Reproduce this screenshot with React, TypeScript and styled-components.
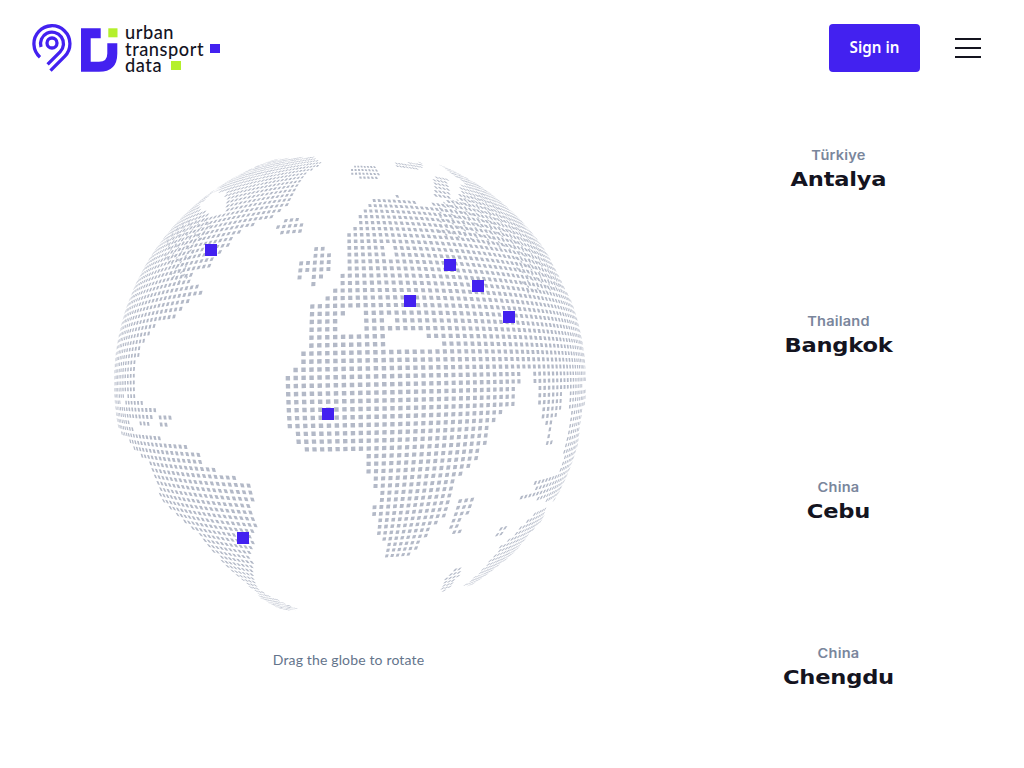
import React from 'react';
import styled, { createGlobalStyle } from 'styled-components';

const CX = 350, CY = 383, R = 236, K = 0.27;
type P = [number, number][];
const at = (ox: number, oy: number, a: number[]): P => {
  const o: P = [];
  for (let i = 0; i < a.length; i += 2) o.push([ox + a[i] / 3, oy + a[i + 1] / 3]);
  return o;
};
const Z2 = (a: number[]) => at(110, 150, a);
const Z3 = (a: number[]) => at(350, 150, a);
const Z4 = (a: number[]) => at(110, 380, a);
const Z5 = (a: number[]) => at(350, 380, a);

const land: P[] = [
  // North America
  Z2([610,20,640,42,600,62,580,78,575,100,560,130,535,160,525,175,510,190,455,212,415,232,370,270,345,293,320,320,305,340,300,365,250,362,240,385,255,405,280,425,240,455,220,478,185,505,128,530,122,558,98,580,92,612,82,635,80,660,72,690,72,722,0,722,-40,500,100,250,300,100,450,30]),
  Z2([490,248,495,225,550,200,575,218,572,248]),
  Z2([610,288,648,288,670,330,668,362,632,392,622,408,605,405,562,388,565,335]),
  // Africa + Eurasia
  [
    ...Z2([518,712,540,668,565,638,588,590,585,460,652,455,655,415,680,393,705,368,712,245]),
    ...Z3([15,228,45,172,60,155,95,140,148,138,188,152,225,170,250,162,320,150,340,100,345,82,400,100,560,250,720,560,730,700,520,700,505,712]),
    ...Z5([505,5,505,45,485,78,448,108,425,130,422,175,398,198,394,222,372,248,348,272,325,292,318,315,312,340,308,360,300,400,274,420,252,440,244,462,222,475,218,495,192,515,172,532,98,533,98,510,102,492,85,478,85,455,87,438,72,425,68,378,92,352,92,338,72,325,72,294,47,275,47,222,0,208]),
    ...Z4([720,212,582,218,552,192,548,155,528,148,522,92,516,10]),
  ],
  // India-like peninsula
  Z5([553,5,705,5,695,22,642,22,636,76,622,100,606,130,606,198,584,198,590,150,574,125,578,100,566,75,566,40]),
  // limb strip
  Z5([652,22,720,22,695,100,684,190,664,262,640,320,620,322,626,280,638,236,645,190,658,150,658,95,655,60]),
  // Madagascar / peninsula
  Z5([347,344,380,344,372,378,342,418,330,458,295,458,304,425,318,395,326,362]),
  // Sumatra
  Z5([318,563,337,563,326,590,302,625,272,637,292,585]),
  // Australia-like strip
  Z5([342,618,395,572,428,530,458,492,490,465,520,432,545,410,566,385,592,380,578,420,556,442,522,482,500,512,470,537,440,562,400,592,362,616]),
  Z5([432,470,438,458,458,438,468,440,462,462,448,472]),
  Z5([505,368,520,335,548,332,552,310,585,284,616,282,636,310,632,330,612,362,558,365,548,350,520,352,516,372]),
  // Small far north
  Z3([3,52,35,42,88,55,85,82,50,97,5,72]),
  Z3([133,38,218,38,218,58,135,52]),
  Z3([248,82,296,82,300,148,252,148]),
  Z3([262,40,350,72,420,130,345,100]),
  // South America
  Z4([75,208,58,182,84,165,150,163,150,178,198,180,238,205,275,225,282,255,322,268,362,288,428,303,434,335,428,375,438,440,428,510,428,590,442,622,482,650,565,688,520,692,460,660,418,618,368,578,318,522,272,472,228,432,188,396,158,362,138,312,122,272,112,240,88,225]),
  Z4([12,72,98,62,100,84,138,86,136,108,132,132,84,132,84,114,62,114,62,140,80,160,80,187,60,187,36,160,18,146]),
  Z4([145,98,188,98,186,112,174,142,158,142,144,124]),
  Z4([52,43,76,43,76,60,52,60]),
  Z4([60,18,74,18,74,34,60,34]),
  Z4([10,-10,50,-10,45,20,48,40,28,72,8,72]),
];

const holes: P[] = [
  Z2([305,130,345,122,352,165,338,198,292,192,265,168]),
  Z2([698,498,722,498,722,558,682,558,682,528]),
  Z2([585,368,606,368,606,412,560,412,560,395]),
  Z2([650,368,682,368,682,402,650,402]),
  Z2([560,285,606,285,606,328,560,328]),
  Z3([-6,478,28,478,28,546,-6,546]),
  Z3([108,550,158,548,158,545,228,545,228,570,278,570,278,594,108,596]),
  Z3([105,292,132,292,132,318,105,318]),
  Z3([105,498,126,498,126,522,105,522]),
  Z5([515,-40,552,-40,552,50,515,50]),
];

const moire: P[] = [
  Z2([170,225,300,200,305,240,240,320,235,395,190,395,165,330]),
  Z3([255,165,400,130,560,280,640,420,530,430,480,300,270,250]),
];

const inPoly = (x: number, y: number, p: P) => {
  let c = false;
  for (let i = 0, j = p.length - 1; i < p.length; j = i++) {
    const [xi, yi] = p[i], [xj, yj] = p[j];
    if ((yi > y) !== (yj > y) && x < ((xj - xi) * (y - yi)) / (yj - yi) + xi) c = !c;
  }
  return c;
};

// Wraps a flat dot grid over the disk: meridians converge and rows bow away from the equator.
const project = (gx: number, gy: number, rot: number): [number, number] | null => {
  const c = Math.cos(rot), s = Math.sin(rot);
  const a = (gx * c - gy * s) / R, b = (gx * s + gy * c) / R;
  if (Math.abs(a) >= Math.PI / 2 || Math.abs(b) >= Math.PI / 2) return null;
  const bow = K * (1 - (b / (Math.PI / 2)) ** 2);
  const y = Math.sin(b) * (1 - bow * (1 - Math.cos(a)));
  const x = Math.sqrt(1 - y * y) * Math.sin(a);
  return [CX + R * x, CY + R * y];
};

const dots = (step: number, size: number, rot: number, regions: P[], cut: P[]) => {
  let out = '';
  const n = Math.ceil(380 / step);
  const h = size / 2;
  for (let i = -n; i <= n; i++) {
    for (let j = -n; j <= n; j++) {
      const gx = i * step + 2, gy = j * step + 2;
      const m = project(gx, gy, rot);
      if (!m) continue;
      if (!regions.some((p) => inPoly(m[0], m[1], p))) continue;
      if (cut.some((p) => inPoly(m[0], m[1], p))) continue;
      const q = [project(gx - h, gy - h, rot), project(gx + h, gy - h, rot), project(gx + h, gy + h, rot), project(gx - h, gy + h, rot)];
      if (q.some((v) => !v)) continue;
      out += 'M' + q.map((v) => `${v![0].toFixed(1)} ${v![1].toFixed(1)}`).join('L') + 'Z';
    }
  }
  return out;
};

const landPath = dots(8.1, 4.5, -0.02, land, holes);
const moirePath = dots(8.1, 2.8, 0.5, moire, []);

const markers = [[211, 250], [450, 265], [478, 286], [410, 301], [509, 317], [328, 414], [243, 538]];
const places = [
  { country: 'Türkiye', city: 'Antalya' },
  { country: 'Thailand', city: 'Bangkok' },
  { country: 'China', city: 'Cebu' },
  { country: 'China', city: 'Chengdu' },
];

const Global = createGlobalStyle`
  html, body { margin: 0; padding: 0; background: #fff; }
  body { font-family: "Noto Sans", sans-serif; overflow: hidden; }
`;
const Page = styled.div`
  width: 1024px;
  height: 768px;
  overflow: hidden;
`;
const Header = styled.header`
  height: 96px;
  box-sizing: border-box;
  padding: 24px 43px 0 32px;
  display: flex;
  justify-content: space-between;
  align-items: flex-start;
`;
const Logo = styled.div`
  display: flex;
  align-items: flex-start;
  height: 48px;
`;
const LogoMarks = styled.svg`
  width: 87px;
  height: 48px;
  flex: none;
`;
const Wordmark = styled.div`
  margin-left: 6px;
  font-family: "Lato", sans-serif;
  font-size: 18.2px;
  font-weight: 500;
  line-height: 16px;
  letter-spacing: 0.55px;
  color: #14141f;
`;
const WordLine = styled.div`
  display: flex;
  align-items: center;
  height: 16.5px;
`;
const Chip = styled.span<{ $lime?: boolean; $left: number }>`
  width: 10px;
  height: 9px;
  flex: none;
  margin-left: ${(p) => p.$left}px;
  background: ${(p) => (p.$lime ? '#b4f02c' : '#4321f0')};
`;
const Actions = styled.div`
  display: flex;
  align-items: center;
  gap: 35px;
`;
const SignIn = styled.button`
  width: 91px;
  height: 48px;
  padding: 0 0 2px;
  border: 0;
  border-radius: 4px;
  background: #4321f0;
  color: #fff;
  font-family: "Noto Sans", sans-serif;
  font-size: 15.2px;
  font-weight: 600;
`;
const Burger = styled.div`
  width: 26px;
  display: flex;
  flex-direction: column;
  gap: 7px;
`;
const BurgerLine = styled.span`
  display: block;
  height: 2px;
  background: #14141f;
`;
const Main = styled.main`
  display: flex;
  padding: 47px 0 0 110px;
`;
const GlobeCol = styled.div`
  width: 480px;
  flex: none;
  display: flex;
  flex-direction: column;
  align-items: center;
`;
const GlobeSvg = styled.svg`
  width: 480px;
  height: 480px;
  display: block;
`;
const Caption = styled.div`
  margin-top: 28px;
  margin-left: -3px;
  font-family: "Lato", sans-serif;
  font-size: 14px;
  line-height: 18px;
  letter-spacing: 0.15px;
  color: #64748b;
`;
const Places = styled.div`
  margin-left: 148px;
  margin-top: 4px;
  width: 201px;
  display: flex;
  flex-direction: column;
`;
const Place = styled.div`
  height: 166px;
  text-align: center;
`;
const Country = styled.div`
  font-family: "Inter", sans-serif;
  font-size: 13px;
  font-weight: 600;
  line-height: 16px;
  letter-spacing: 0.2px;
  color: #7a869c;
  transform: scaleX(1.12);
`;
const City = styled.div`
  margin-top: 3px;
  font-family: "DejaVu Sans", sans-serif;
  font-size: 20px;
  font-weight: 700;
  line-height: 26px;
  letter-spacing: -0.2px;
  color: #14141f;
  transform: scaleX(1.13);
`;

export default function App() {
  return (
    <Page>
      <Global />
      <Header>
        <Logo>
          <LogoMarks viewBox="32 24 87 48">
            <g fill="none" stroke="#4321f0" strokeWidth="3.3">
              <circle cx="52" cy="43" r="5" />
              <path d="M41 47A11.5 11.5 0 1 1 60.1 51.8L47.6 64.3" />
              <path d="M40 57.2A18 18 0 1 1 64.7 56.4L50.5 70.6" />
            </g>
            <path fill="#4321f0" d="M81 28.3H100.7V38.3H90.7V61.7H99Q107.3 61.7 107.3 53.4V43.3H117.3V53.4Q117.3 71.7 99 71.7H81Z" />
            <rect x="108.3" y="28.3" width="9.2" height="9" fill="#b4f02c" />
          </LogoMarks>
          <Wordmark>
            <WordLine>urban</WordLine>
            <WordLine>transport<Chip $left={6} /></WordLine>
            <WordLine>data<Chip $lime $left={9} /></WordLine>
          </Wordmark>
        </Logo>
        <Actions>
          <SignIn>Sign in</SignIn>
          <Burger>
            <BurgerLine />
            <BurgerLine />
            <BurgerLine />
          </Burger>
        </Actions>
      </Header>
      <Main>
        <GlobeCol>
          <GlobeSvg viewBox="110 143 480 480">
            <path d={moirePath} fill="#bcc2ce" />
            <path d={landPath} fill="#b3b9c7" />
            {markers.map(([x, y]) => (
              <rect key={`${x}-${y}`} x={x - 6} y={y - 6} width="12" height="12" fill="#4321f0" />
            ))}
          </GlobeSvg>
          <Caption>Drag the globe to rotate</Caption>
        </GlobeCol>
        <Places>
          {places.map((p) => (
            <Place key={p.city}>
              <Country>{p.country}</Country>
              <City>{p.city}</City>
            </Place>
          ))}
        </Places>
      </Main>
    </Page>
  );
}
